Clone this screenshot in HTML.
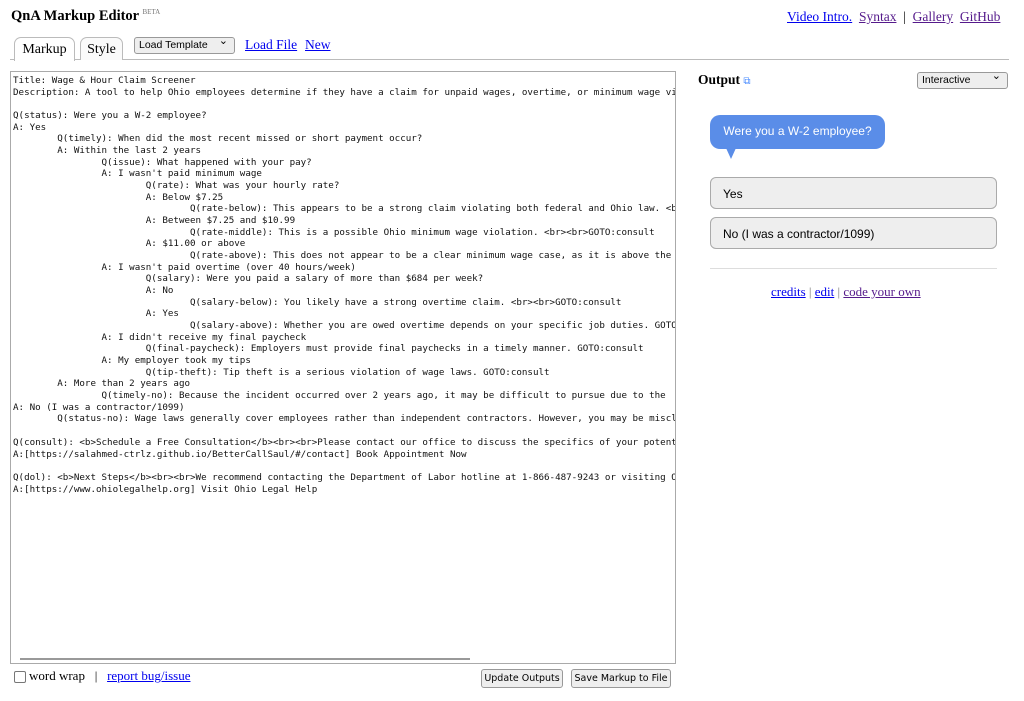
<!DOCTYPE html>
<html><head><meta charset="utf-8"><style>
body{margin:0;background:#fff;font-family:"Liberation Serif",serif;width:1024px;height:701px;overflow:hidden;position:relative}
a{color:#00e;}
.abs{position:absolute}
h1{position:absolute;left:11px;top:8px;margin:0;font-size:14.5px;font-weight:bold}
h1 sup{font-size:7px;font-weight:normal;color:#777;vertical-align:6px}
.tab{position:absolute;top:37px;height:22px;border:1px solid #bbb;border-bottom:none;border-radius:7px 7px 0 0;background:#fff;font-size:14px;line-height:24px;text-align:center}
.sel{position:absolute;border:1px solid #999;border-radius:3px;background:#eee;font-family:"Liberation Sans",sans-serif;font-size:10.5px;padding-left:4px;box-sizing:border-box;line-height:15px}
.sel:after{content:"⌄";position:absolute;right:6px;top:-4px;font-size:11px}
pre{position:absolute;left:10px;top:71px;width:666px;height:593px;border:1px solid #aaa;margin:0;padding:3px 2px;box-sizing:border-box;font-family:"DejaVu Sans Mono",monospace;font-size:9.2px;line-height:11.67px;tab-size:8;overflow:hidden;color:#111}
.btn{position:absolute;top:669px;height:17px;border:1px solid #999;border-radius:3px;background:#eee;font-family:"DejaVu Sans",sans-serif;font-size:9.5px;line-height:17px;text-align:center}
.opt{position:absolute;left:710px;width:287px;height:32px;border:1px solid #aaa;border-radius:6px;background:#eee;font-family:"Liberation Sans",sans-serif;font-size:12px;line-height:32px;padding-left:12px;box-sizing:border-box}
</style></head><body>
<h1>QnA Markup Editor <sup>BETA</sup></h1>
<div class="abs" style="left:787px;top:9px;font-size:13.5px"><a href="#">Video Intro.</a>&nbsp; <a href="#" style="color:#551a8b">Syntax</a> &nbsp;|&nbsp; <a href="#" style="color:#551a8b">Gallery</a>&nbsp; <a href="#" style="color:#551a8b">GitHub</a></div>
<div class="abs" style="left:10px;top:59px;width:999px;height:1px;background:#bbb"></div>
<div class="tab" style="left:14px;width:59px;height:23px">Markup</div>
<div class="tab" style="left:80px;width:41px;background:#fafafa">Style</div>
<div class="sel" style="left:134px;top:37px;width:101px;height:17px">Load Template</div>
<a class="abs" href="#" style="left:245px;top:37px;font-size:13.5px">Load File</a>
<a class="abs" href="#" style="left:305px;top:37px;font-size:13.5px">New</a>
<pre>Title: Wage &amp; Hour Claim Screener
Description: A tool to help Ohio employees determine if they have a claim for unpaid wages, overtime, or minimum wage violations.

Q(status): Were you a W-2 employee?
A: Yes
	Q(timely): When did the most recent missed or short payment occur?
	A: Within the last 2 years
		Q(issue): What happened with your pay?
		A: I wasn't paid minimum wage
			Q(rate): What was your hourly rate?
			A: Below $7.25
				Q(rate-below): This appears to be a strong claim violating both federal and Ohio law. &lt;br&gt;
			A: Between $7.25 and $10.99
				Q(rate-middle): This is a possible Ohio minimum wage violation. &lt;br&gt;&lt;br&gt;GOTO:consult
			A: $11.00 or above
				Q(rate-above): This does not appear to be a clear minimum wage case, as it is above the
		A: I wasn't paid overtime (over 40 hours/week)
			Q(salary): Were you paid a salary of more than $684 per week?
			A: No
				Q(salary-below): You likely have a strong overtime claim. &lt;br&gt;&lt;br&gt;GOTO:consult
			A: Yes
				Q(salary-above): Whether you are owed overtime depends on your specific job duties. GOTO:consult
		A: I didn't receive my final paycheck
			Q(final-paycheck): Employers must provide final paychecks in a timely manner. GOTO:consult
		A: My employer took my tips
			Q(tip-theft): Tip theft is a serious violation of wage laws. GOTO:consult
	A: More than 2 years ago
		Q(timely-no): Because the incident occurred over 2 years ago, it may be difficult to pursue due to the
A: No (I was a contractor/1099)
	Q(status-no): Wage laws generally cover employees rather than independent contractors. However, you may be misclassified.

Q(consult): &lt;b&gt;Schedule a Free Consultation&lt;/b&gt;&lt;br&gt;&lt;br&gt;Please contact our office to discuss the specifics of your potential claim.
A:[https://salahmed-ctrlz.github.io/BetterCallSaul/#/contact] Book Appointment Now

Q(dol): &lt;b&gt;Next Steps&lt;/b&gt;&lt;br&gt;&lt;br&gt;We recommend contacting the Department of Labor hotline at 1-866-487-9243 or visiting Ohio
A:[https://www.ohiolegalhelp.org] Visit Ohio Legal Help</pre>
<div class="abs" style="left:20px;top:658px;width:450px;height:2px;background:#999"></div>
<div class="abs" style="left:14px;top:671px;width:10px;height:10px;border:1px solid #777;border-radius:2px"></div>
<div class="abs" style="left:29px;top:668px;font-size:13px">word wrap &nbsp; | &nbsp;&nbsp;<a href="#">report bug/issue</a></div>
<div class="btn" style="left:481px;width:80px">Update Outputs</div>
<div class="btn" style="left:571px;width:98px">Save Markup to File</div>

<div class="abs" style="left:698px;top:72px;font-size:13.5px;font-weight:bold">Output <span style="color:#48f;font-size:10px;font-weight:normal">⧉</span></div>
<div class="sel" style="left:917px;top:72px;width:91px;height:17px">Interactive</div>
<div class="abs" style="left:710px;top:115px;width:175px;height:34px;background:#5a8de8;border-radius:10px;color:#fff;font-family:'Liberation Sans',sans-serif;font-size:12px;line-height:32px;text-align:center">Were you a W-2 employee?</div>
<div class="abs" style="left:726px;top:148px;width:0;height:0;border-left:5px solid transparent;border-right:5px solid transparent;border-top:11px solid #5a8de8"></div>
<div class="opt" style="top:177px">Yes</div>
<div class="opt" style="top:217px">No (I was a contractor/1099)</div>
<div class="abs" style="left:710px;top:268px;width:287px;height:1px;background:#ddd"></div>
<div class="abs" style="left:771px;top:284px;font-size:13px;color:#777"><a href="#" style="color:#00e">credits</a> | <a href="#">edit</a> | <a href="#" style="color:#551a8b">code your own</a></div>
</body></html>
